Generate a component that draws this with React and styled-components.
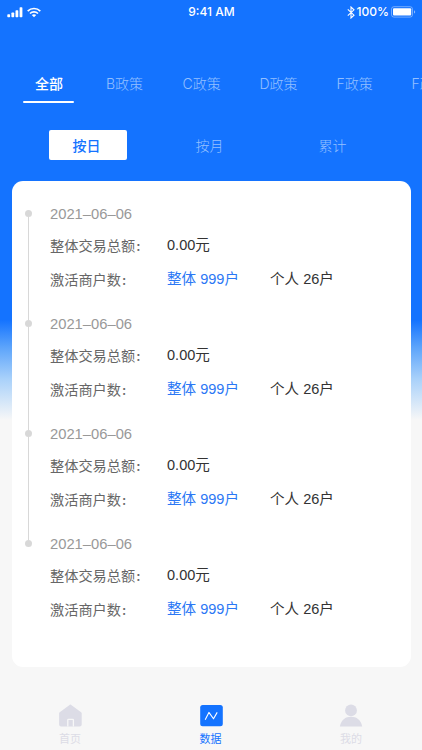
// BASIC
import React from 'react'
import styled, { createGlobalStyle } from 'styled-components'

const GlobalStyle = createGlobalStyle`
	* {
		box-sizing: border-box;
	}
	body {
		margin: 0;
		background: #f7f7f7;
		font-family: "Liberation Sans", "Noto Sans CJK SC", sans-serif;
	}
`
const Screen = styled.div`
	display: flex;
	flex-direction: column;
	width: 422px;
	height: 750px;
	overflow: hidden;
	background: linear-gradient(#1473ff 0, #1473ff 320px, #5ea5fb 348px, #a9d1fa 379px, #f7f7f7 420px);
`
const StatusBar = styled.header`
	display: grid;
	grid-template-columns: 1fr auto 1fr;
	align-items: center;
	height: 24px;
	padding: 0 6px 0 7px;
	color: #fff;
	font-family: Inter, sans-serif;
	font-size: 12px;
	font-weight: 500;
	line-height: 22px;
`
const StatusGroup = styled.div`
	display: flex;
	align-items: center;
	justify-content: ${props => props.$end ? 'flex-end' : 'flex-start'};
	gap: ${props => props.$gap};
`
const Policies = styled.nav`
	display: flex;
	height: 80px;
	padding: 46px 0 0 23px;
	overflow: hidden;
`
const Policy = styled.div`
	flex: none;
	width: ${props => props.$width}px;
	height: 34px;
	padding-left: ${props => props.$active ? 12 : 0}px;
	line-height: 28px;
	font-family: Inter, "Noto Sans CJK SC", sans-serif;
	font-size: 14px;
	font-weight: ${props => props.$active ? 500 : 300};
	color: ${props => props.$active ? '#fff' : '#94c0ff'};
	white-space: nowrap;
`
const Underline = styled.div`
	width: 51px;
	height: 2px;
	margin: 3px 0 0 -12px;
	border-radius: 1px;
	background: #fff;
`
const Periods = styled.nav`
	display: flex;
	justify-content: space-between;
	width: 324px;
	height: 77px;
	padding-top: 26px;
	margin-left: 49px;
`
const Period = styled.div`
	width: 78px;
	height: 30px;
	border-radius: 2px;
	text-align: center;
	text-indent: -3px;
	line-height: 32px;
	font-size: 14px;
	font-weight: ${props => props.$active ? 500 : 300};
	color: ${props => props.$active ? '#1473ff' : '#94c0ff'};
	background: ${props => props.$active ? '#fff' : 'transparent'};
`
const Card = styled.main`
	width: 399px;
	height: 486px;
	margin-left: 12px;
	padding: 23px 0 0 13px;
	border-radius: 11px;
	background: #fff;
`
const Record = styled.section`
	display: flex;
	height: 110px;
`
const Rail = styled.div`
	display: flex;
	flex-direction: column;
	align-items: center;
	width: 7px;
	margin-right: 18px;
	padding-top: 6px;
	margin-bottom: -6px;
`
const Dot = styled.div`
	flex: none;
	width: 7px;
	height: 7px;
	border-radius: 50%;
	background: #d8d8d8;
`
const Line = styled.div`
	flex: 1;
	width: 1px;
	background: #d8d8d8;
`
const DateText = styled.div`
	height: 24px;
	line-height: 21px;
	font-size: 14.75px;
	color: #999;
`
const Row = styled.div`
	display: grid;
	grid-template-columns: 117px 103px auto;
	height: 34px;
	line-height: 35px;
	font-size: 14.55px;
	white-space: nowrap;
	color: #333;
`
const Label = styled.span`
	font-size: 14.2px;
	color: #666;
`
const Colon = styled.span`
	margin-left: 1px;
	font-family: Inter, sans-serif;
	font-weight: 500;
`
const Accent = styled.span`
	color: #2b78f5;
`
const TabBar = styled.footer`
	display: flex;
	justify-content: space-between;
	padding: 37px 56px 0 55px;
`
const Tab = styled.div`
	display: flex;
	flex-direction: column;
	align-items: center;
	width: 30px;
	font-size: 11px;
	line-height: 16px;
	color: ${props => props.$active ? '#1473ff' : '#dcdce6'};
	svg {
		display: block;
		margin-bottom: 4px;
	}
`

const policies = [
	{ name: '全部', width: 83 },
	{ name: 'B政策', width: 76.5 },
	{ name: 'C政策', width: 77 },
	{ name: 'D政策', width: 77 },
	{ name: 'F政策', width: 75 },
	{ name: 'F政策', width: 75 },
]
const periods = ['按日', '按月', '累计']
const records = ['2021–06–06', '2021–06–06', '2021–06–06', '2021–06–06']

const Signal = () => (
	<svg width="16" height="11" viewBox="0 0 16 11" fill="#fff">
		<rect x="0.3" y="7.3" width="2.8" height="3" rx="0.7" />
		<rect x="4.4" y="5.5" width="2.8" height="4.8" rx="0.7" />
		<rect x="8.5" y="3.2" width="2.8" height="7.1" rx="0.7" />
		<rect x="12.6" y="0.3" width="2.8" height="10" rx="0.7" />
	</svg>
)
const Wifi = () => (
	<svg width="14" height="11" viewBox="0 0 14 11" fill="none" stroke="#fff" strokeWidth="1.7">
		<path d="M0.7 4.1C4.2 0.6 9.8 0.6 13.3 4.1" />
		<path d="M3 6.5C5.2 4.4 8.8 4.4 11 6.5" />
		<path d="M4.8 8.1C6.1 7 7.9 7 9.2 8.1L7 10.3Z" fill="#fff" stroke="none" />
	</svg>
)
const Bluetooth = () => (
	<svg width="8" height="13" viewBox="0 0 8 13" fill="none" stroke="#fff" strokeWidth="1.1">
		<path d="M0.8 3.3L7 9.2L4 12V1L7 3.8L0.8 9.7" />
	</svg>
)
const Battery = () => (
	<svg width="25" height="12" viewBox="0 0 25 12">
		<rect x="0.5" y="0.7" width="21" height="10.4" rx="2.4" fill="none" stroke="#fff" strokeOpacity="0.4" />
		<rect x="2" y="2.2" width="18.2" height="7.4" rx="1" fill="#fff" />
		<path d="M23 4.2C24.6 4.8 24.6 7 23 7.6Z" fill="#fff" fillOpacity="0.5" />
	</svg>
)
const HomeIcon = () => (
	<svg width="24" height="23" viewBox="0 0 24 23">
		<path d="M12.4 0.6Q13 0.6 13.6 1.2L23.1 8.3Q23.7 8.8 23.7 9.6V20.4Q23.7 22.4 21.7 22.4H3.1Q1.1 22.4 1.1 20.4V9.6Q1.1 8.8 1.7 8.3L11.2 1.2Q11.8 0.6 12.4 0.6Z" fill="#dcdce6" />
		<path d="M9.8 22.4V15.9Q9.8 15.3 10.4 15.3H14.8Q15.4 15.3 15.4 15.9V22.4" fill="none" stroke="#f7f7f7" strokeWidth="1.3" />
	</svg>
)
const DataIcon = () => (
	<svg width="24" height="23" viewBox="0 0 24 23">
		<rect x="1.2" y="1" width="22.6" height="21.2" rx="2.5" fill="#1473ff" />
		<path d="M6.2 15.7L9.9 8.4L14.5 14.8L18.2 8.4" fill="none" stroke="#fff" strokeWidth="1.1" strokeLinejoin="round" />
	</svg>
)
const MeIcon = () => (
	<svg width="24" height="23" viewBox="0 0 24 23" fill="#dcdce6">
		<circle cx="12" cy="6.4" r="5.9" />
		<path d="M0.9 22.6C2 16 6.4 12.8 12 12.8C17.6 12.8 22 16 23.2 22.6Z" />
	</svg>
)

const App = () => (
	<>
		<GlobalStyle />
		<Screen>
			<StatusBar>
				<StatusGroup $gap="4px">
					<Signal />
					<Wifi />
				</StatusGroup>
				<span>9:41 AM</span>
				<StatusGroup $end $gap="2px">
					<Bluetooth />
					<span>100%</span>
					<Battery />
				</StatusGroup>
			</StatusBar>
			<Policies>
				{policies.map((policy, index) => (
					<Policy key={index} $width={policy.width} $active={index === 0}>
						{policy.name}
						{index === 0 && <Underline />}
					</Policy>
				))}
			</Policies>
			<Periods>
				{periods.map((period, index) => (
					<Period key={period} $active={index === 0}>{period}</Period>
				))}
			</Periods>
			<Card>
				{records.map((date, index) => (
					<Record key={index}>
						<Rail>
							<Dot />
							{index < records.length - 1 && <Line />}
						</Rail>
						<div>
							<DateText>{date}</DateText>
							<Row>
								<Label>整体交易总额<Colon>:</Colon></Label>
								<span>0.00元</span>
							</Row>
							<Row>
								<Label>激活商户数<Colon>:</Colon></Label>
								<Accent>整体 999户</Accent>
								<span>个人 26户</span>
							</Row>
						</div>
					</Record>
				))}
			</Card>
			<TabBar>
				<Tab><HomeIcon />首页</Tab>
				<Tab $active><DataIcon />数据</Tab>
				<Tab><MeIcon />我的</Tab>
			</TabBar>
		</Screen>
	</>
)

export default App
